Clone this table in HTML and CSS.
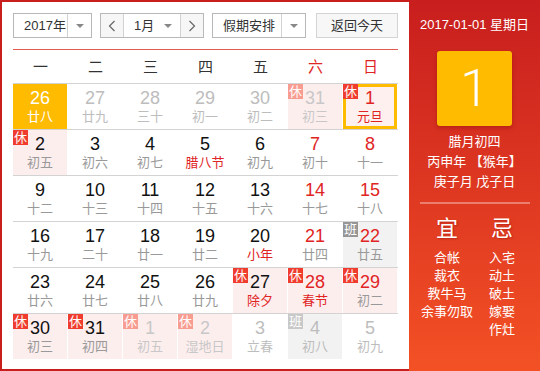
FILE: index.html
```html
<!DOCTYPE html>
<html lang="zh-CN">
<head>
<meta charset="utf-8">
<title>万年历</title>
<link rel="stylesheet" href="styles.css">
</head>
<body>
<div class="cal">
  <div class="main">
    <div class="toolbar">
      <div class="select year">
        <span class="sel-text">2017年</span>
        <span class="sel-arrow"><span class="tri"></span></span>
      </div>
      <div class="month-group">
        <span class="nav-btn"><svg width="8" height="12" viewBox="0 0 8 12"><polyline points="6.5,1 1.5,6 6.5,11" fill="none" stroke="#666" stroke-width="1.2"/></svg></span>
        <span class="month-sel"><span class="sel-text">1月</span><span class="tri"></span></span>
        <span class="nav-btn"><svg width="8" height="12" viewBox="0 0 8 12"><polyline points="1.5,1 6.5,6 1.5,11" fill="none" stroke="#666" stroke-width="1.2"/></svg></span>
      </div>
      <div class="select holiday">
        <span class="sel-text">假期安排</span>
        <span class="sel-arrow"><span class="tri"></span></span>
      </div>
      <div class="today-btn">返回今天</div>
    </div>
    <div class="rule"></div>
    <div class="weekhead">
      <span>一</span><span>二</span><span>三</span><span>四</span><span>五</span><span class="wk">六</span><span class="wk">日</span>
    </div>
    <div class="grid">
      <div class="week">
        <div class="day cur"><b>26</b><i>廿八</i></div>
        <div class="day out"><b>27</b><i>廿九</i></div>
        <div class="day out"><b>28</b><i>三十</i></div>
        <div class="day out"><b>29</b><i>初一</i></div>
        <div class="day out"><b>30</b><i>初二</i></div>
        <div class="day out rest"><span class="tag">休</span><b>31</b><i>初三</i></div>
        <div class="day rest sel"><span class="tag">休</span><b class="red">1</b><i class="red">元旦</i></div>
      </div>
      <div class="week">
        <div class="day rest"><span class="tag">休</span><b>2</b><i>初五</i></div>
        <div class="day"><b>3</b><i>初六</i></div>
        <div class="day"><b>4</b><i>初七</i></div>
        <div class="day"><b>5</b><i class="red">腊八节</i></div>
        <div class="day"><b>6</b><i>初九</i></div>
        <div class="day"><b class="red">7</b><i>初十</i></div>
        <div class="day"><b class="red">8</b><i>十一</i></div>
      </div>
      <div class="week">
        <div class="day"><b>9</b><i>十二</i></div>
        <div class="day"><b>10</b><i>十三</i></div>
        <div class="day"><b>11</b><i>十四</i></div>
        <div class="day"><b>12</b><i>十五</i></div>
        <div class="day"><b>13</b><i>十六</i></div>
        <div class="day"><b class="red">14</b><i>十七</i></div>
        <div class="day"><b class="red">15</b><i>十八</i></div>
      </div>
      <div class="week">
        <div class="day"><b>16</b><i>十九</i></div>
        <div class="day"><b>17</b><i>二十</i></div>
        <div class="day"><b>18</b><i>廿一</i></div>
        <div class="day"><b>19</b><i>廿二</i></div>
        <div class="day"><b>20</b><i class="red">小年</i></div>
        <div class="day"><b class="red">21</b><i>廿四</i></div>
        <div class="day work"><span class="tag">班</span><b class="red">22</b><i>廿五</i></div>
      </div>
      <div class="week">
        <div class="day"><b>23</b><i>廿六</i></div>
        <div class="day"><b>24</b><i>廿七</i></div>
        <div class="day"><b>25</b><i>廿八</i></div>
        <div class="day"><b>26</b><i>廿九</i></div>
        <div class="day rest"><span class="tag">休</span><b>27</b><i class="red">除夕</i></div>
        <div class="day rest"><span class="tag">休</span><b class="red">28</b><i class="red">春节</i></div>
        <div class="day rest"><span class="tag">休</span><b class="red">29</b><i>初二</i></div>
      </div>
      <div class="week">
        <div class="day rest"><span class="tag">休</span><b>30</b><i>初三</i></div>
        <div class="day rest"><span class="tag">休</span><b>31</b><i>初四</i></div>
        <div class="day out rest"><span class="tag">休</span><b>1</b><i>初五</i></div>
        <div class="day out rest"><span class="tag">休</span><b>2</b><i>湿地日</i></div>
        <div class="day out"><b>3</b><i>立春</i></div>
        <div class="day out work"><span class="tag">班</span><b>4</b><i>初八</i></div>
        <div class="day out"><b>5</b><i>初九</i></div>
      </div>
    </div>
  </div>
  <div class="side">
    <div class="side-date">2017-01-01 星期日</div>
    <div class="big-day">1</div>
    <div class="lunar">
      <div>腊月初四</div>
      <div>丙申年 【猴年】</div>
      <div>庚子月 戊子日</div>
    </div>
    <div class="side-rule"></div>
    <div class="yiji">
      <div class="yj-col">
        <div class="yj-title">宜</div>
        <div>合帐</div>
        <div>裁衣</div>
        <div>教牛马</div>
        <div>余事勿取</div>
      </div>
      <div class="yj-col">
        <div class="yj-title">忌</div>
        <div>入宅</div>
        <div>动土</div>
        <div>破土</div>
        <div>嫁娶</div>
        <div>作灶</div>
      </div>
    </div>
  </div>
</div>
</body>
</html>
```

FILE: styles.css
```css
* { box-sizing: border-box; }
html, body { margin: 0; padding: 0; background: #fff; }
body {
  font-family: "Liberation Sans", "Noto Sans CJK SC", sans-serif;
  color: #333;
}
.cal {
  width: 540px;
  height: 371px;
  border: 2px solid #c81e1e;
  border-right: 0;
  display: flex;
  background: #fff;
}
.main {
  width: 407px;
  padding: 11px 11px 0 11px;
}
.toolbar {
  display: flex;
  height: 25px;
  font-size: 13px;
  color: #333;
}
.select {
  display: flex;
  border: 1px solid #b8b8b8;
  background: #fff;
}
.sel-text { line-height: 23px; padding-left: 10px; flex: 1; }
.sel-arrow {
  width: 24px;
  border-left: 1px solid #d2d2d2;
  display: flex;
  align-items: center;
  justify-content: center;
}
.tri {
  width: 0; height: 0;
  border-left: 4px solid transparent;
  border-right: 4px solid transparent;
  border-top: 4px solid #888;
}
.year { width: 79px; }
.year .sel-text { padding-left: 10px; }
.month-group {
  display: flex;
  width: 104px;
  margin-left: 8px;
  border: 1px solid #b8b8b8;
}
.nav-btn {
  width: 22px;
  background: #f6f6f6;
  display: flex;
  align-items: center;
  justify-content: center;
}
.month-sel {
  flex: 1;
  display: flex;
  align-items: center;
  border-left: 1px solid #d2d2d2;
  border-right: 1px solid #d2d2d2;
  background: #fff;
  padding-right: 8px;
}
.month-sel .sel-text { padding-left: 10px; }
.holiday { width: 94px; margin-left: 8px; }
.holiday .sel-text { padding-left: 10px; }
.today-btn {
  width: 82px;
  margin-left: 10px;
  border: 1px solid #d4d4d4;
  background: #f7f7f7;
  text-align: center;
  line-height: 23px;
}
.rule {
  margin-top: 11px;
  height: 1px;
  background: #e35a52;
}
.weekhead {
  display: flex;
  height: 33px;
  line-height: 33px;
  font-size: 15px;
  color: #333;
}
.weekhead span { width: 55px; text-align: center; }
.weekhead .wk { color: #e02424; }
.week {
  display: flex;
  height: 46px;
  border-top: 1px solid #d3d3d3;
}
.week:last-child { height: 46px; }
.day {
  position: relative;
  width: 54px;
  height: 45px;
  margin-right: 1px;
  text-align: center;
  padding-top: 4px;
}
.day b {
  display: block;
  font-weight: normal;
  font-size: 18px;
  line-height: 20px;
  color: #111;
}
.day i {
  display: block;
  font-style: normal;
  font-size: 13px;
  line-height: 18px;
  color: #999;
}
.day .red { color: #e02424; }
.day.out b, .day.out i { color: #bdbdbd; }
.day.cur { background: #ffbb00; }
.day.cur b, .day.cur i { color: #fff; }
.day.rest { background: #fdeeee; }
.day.work { background: #f2f2f2; }
.day.sel { box-shadow: inset 0 0 0 3px #ffbb00; background: #fff0f0; }
.tag {
  position: absolute;
  left: 0;
  top: 0;
  width: 15px;
  height: 15px;
  font-size: 13px;
  line-height: 15px;
  color: #fff;
  text-align: center;
  background: #f03c2e;
}
.work .tag { background: #969696; }
.out.rest .tag { background: #f89c92; }
.out.rest b, .out.rest i { color: #c8c8c8; }
.out.work .tag { background: #c8c8c8; }
.side {
  width: 131px;
  margin-top: -2px;
  margin-bottom: -2px;
  background: linear-gradient(to bottom, #c81e1e 0%, #f35125 100%);
  color: #fff;
  display: flex;
  flex-direction: column;
  align-items: center;
  font-size: 13px;
}
.side-date {
  margin-top: 16px;
  line-height: 18px;
}
.big-day {
  margin-top: 17px;
  width: 75px;
  height: 75px;
  background: #ffbb00;
  border-radius: 3px;
  box-shadow: 0 2px 4px rgba(120, 0, 0, 0.35);
  text-align: center;
  font-family: Roboto, "Liberation Sans", sans-serif;
  font-weight: 300;
  font-size: 52px;
  line-height: 75px;
}
.lunar {
  margin-top: 6px;
  line-height: 20px;
  text-align: center;
}
.side-rule {
  margin-top: 10px;
  width: 110px;
  height: 2px;
  background: rgba(255, 255, 255, 0.35);
}
.yiji {
  display: flex;
  width: 110px;
  margin-top: 10px;
}
.yj-col {
  width: 55px;
  text-align: center;
  line-height: 18px;
}
.yj-title {
  font-size: 22px;
  line-height: 30px;
  margin-bottom: 5px;
  text-shadow: 1px 1px 2px rgba(120, 0, 0, 0.4);
}
```
